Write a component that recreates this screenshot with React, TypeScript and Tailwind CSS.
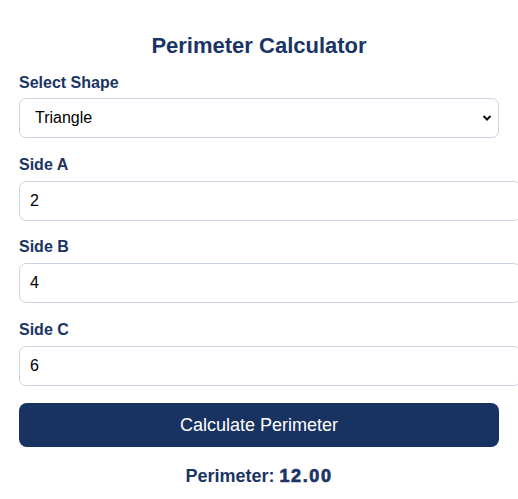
import React, { useState } from "react";

export default function App() {
  const [shape, setShape] = useState("Triangle");
  const [a, setA] = useState("2");
  const [b, setB] = useState("4");
  const [c, setC] = useState("6");

  const fields: [string, string, (v: string) => void, string][] = [
    ["Side A", a, setA, "mt-[18px]"],
    ["Side B", b, setB, "mt-[17px]"],
    ["Side C", c, setC, "mt-[18px]"],
  ];

  return (
    <div
      className="w-[518px] h-[499px] overflow-hidden bg-white px-[19px] pt-[33px]"
      style={{ fontFamily: '"Liberation Sans", Arial, sans-serif' }}
    >
      <h2 className="text-center text-[22px] leading-[25px] font-bold text-[#1a3464]">
        Perimeter Calculator
      </h2>
      <div className="mt-[16px]">
        <label className="block text-[16px] leading-[18px] font-bold text-[#1a3464] mb-[6px]">
          Select Shape
        </label>
        <div className="relative w-full">
          <select
            value={shape}
            onChange={(e) => setShape(e.target.value)}
            className="appearance-none w-full h-[40px] border border-[#cbd5e1] rounded-[7px] bg-white pl-[15px] text-[16px] text-black outline-none"
          >
            <option>Triangle</option>
            <option>Rectangle</option>
            <option>Square</option>
            <option>Circle</option>
          </select>
          <svg
            className="absolute right-[7px] top-[16px] pointer-events-none"
            width="10"
            height="8"
            viewBox="0 0 10 8"
          >
            <path d="M1.5 2 L5 5.5 L8.5 2" stroke="#111" strokeWidth="2" fill="none" />
          </svg>
        </div>
      </div>
      {fields.map(([label, val, set, mt]) => (
        <div key={label} className={mt}>
          <label className="block text-[16px] leading-[18px] font-bold text-[#1a3464] mb-[7px]">
            {label}
          </label>
          <input
            type="number"
            value={val}
            onChange={(e) => set(e.target.value)}
            className="box-content w-full h-[18px] py-[10px] px-[10px] border border-[#cbd5e1] rounded-[7px] text-[16px] leading-[18px] text-black outline-none [appearance:textfield] [&::-webkit-inner-spin-button]:appearance-none"
          />
        </div>
      ))}
      <button className="mt-[17px] w-full h-[44px] rounded-[8px] bg-[#183261] text-white text-[18px]">
        Calculate Perimeter
      </button>
      <div className="mt-[19px] text-center text-[18px] leading-[20px] font-bold text-[#1a3464]">
        Perimeter:{" "}
        <span className="tracking-[1.6px] [-webkit-text-stroke:0.7px_#1a3464]">12.00</span>
      </div>
    </div>
  );
}
